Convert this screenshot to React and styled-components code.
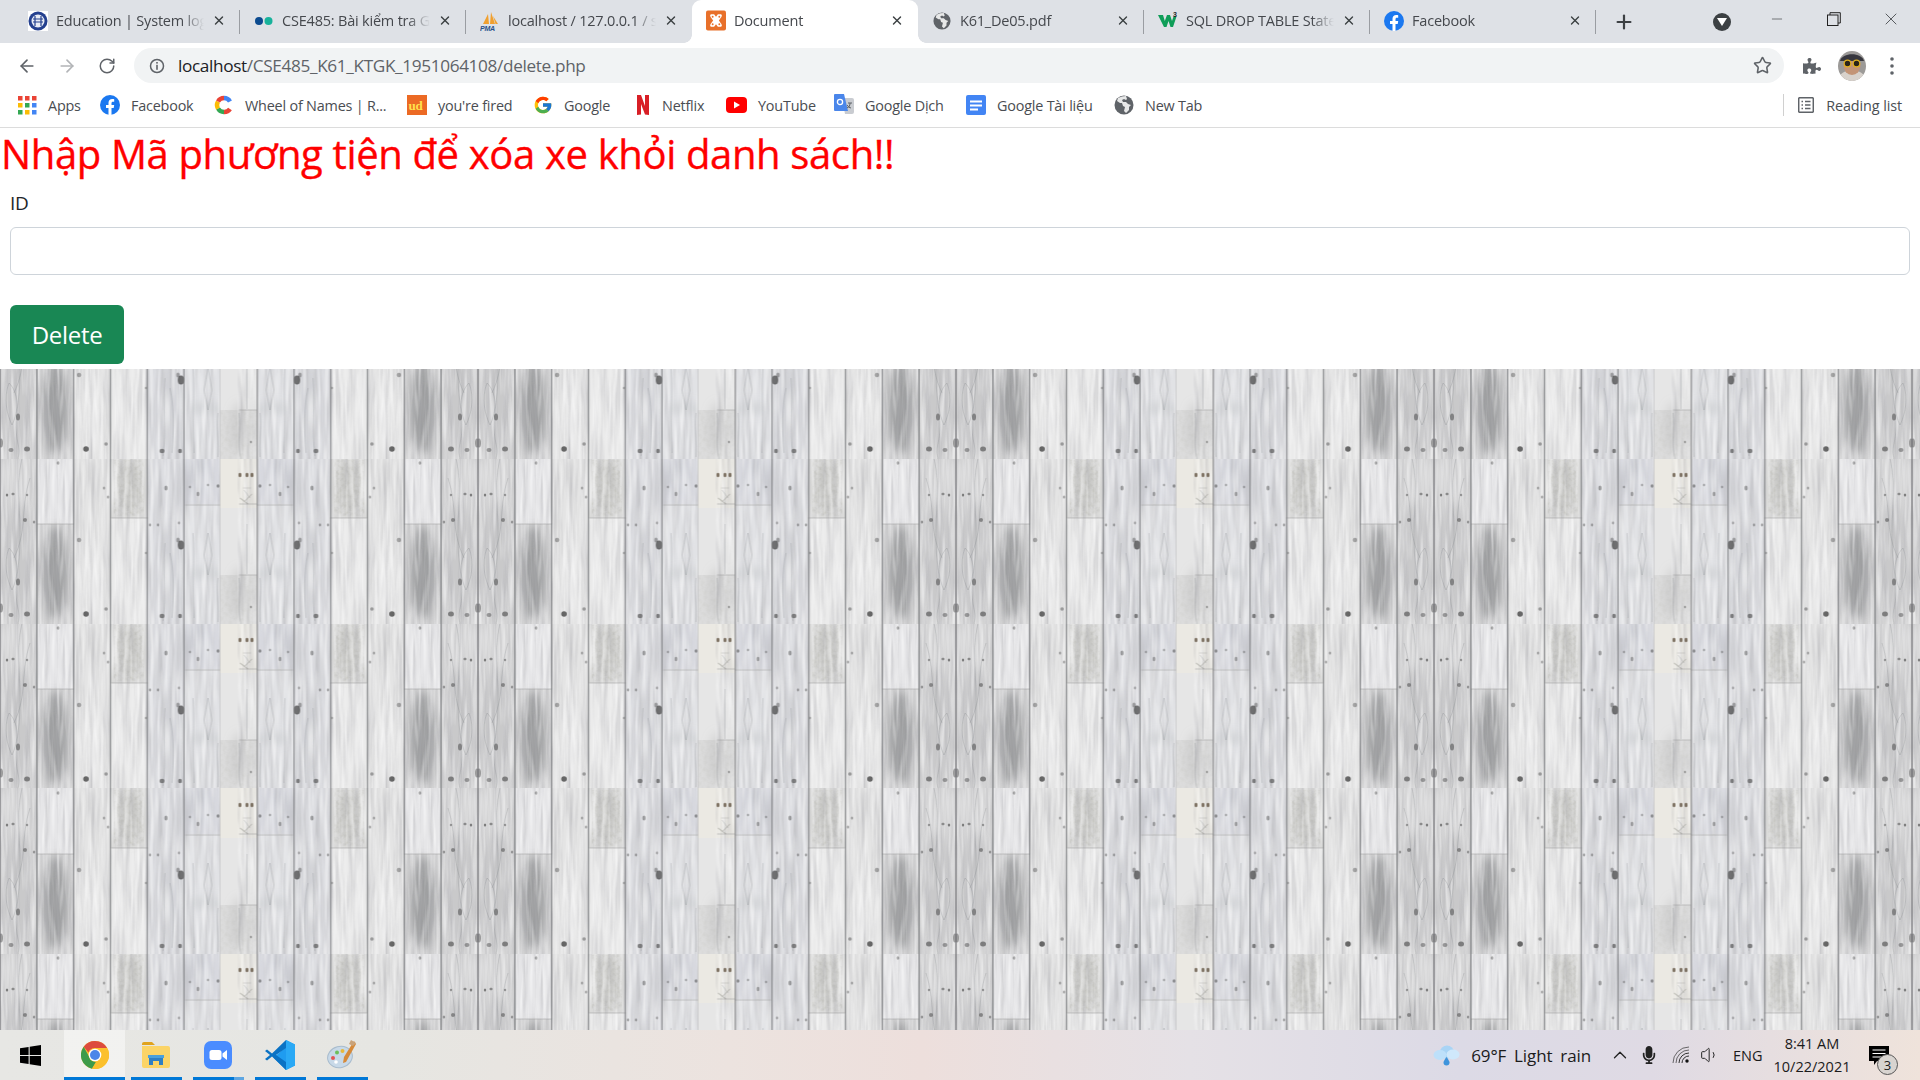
import React from "react";
import styled, { createGlobalStyle } from "styled-components";
import { ArrowLeft, ArrowRight, RotateCw, Star, Plus, X, Minus, ChevronUp, Volume1 } from "lucide-react";
import { FcGoogle } from "react-icons/fc";
import { FaPuzzlePiece, FaMicrophone } from "react-icons/fa";

const UI = '"Open Sans", "Noto Sans", "Liberation Sans", sans-serif';

const Global = createGlobalStyle`
  html, body { margin: 0; padding: 0; height: 100%; background: #fff; overflow: hidden; }
  body { font-family: ${UI}; }
  #root { height: 100%; }
`;

const Screen = styled.div`
  width: 1920px; height: 1080px; display: flex; flex-direction: column; overflow: hidden; background: #fff;
`;

/* ---------- tab strip ---------- */
const TabStrip = styled.div`
  height: 43px; flex: none; display: flex; align-items: stretch; background: #dee1e6; padding-left: 14px;
`;
const Tab = styled.div`
  position: relative; width: 226px; flex: none; box-sizing: border-box; display: flex; align-items: center;
  padding: 0 0 2px 14px; border-radius: 9px 9px 0 0; background: ${p => (p.$active ? "#fff" : "transparent")};
  color: #45484d; font-size: 14.5px; letter-spacing: -0.2px;
  ${p => p.$sep && `&::after { content: ""; position: absolute; right: 0; top: 10px; height: 24px; width: 1px; background: #9a9da2; }`}
  ${p => p.$active && `
    &::before { content: ""; position: absolute; left: -8px; bottom: 0; width: 8px; height: 8px; background: radial-gradient(circle at 0 0, #dee1e6 7.5px, #fff 8px); }
    &::after { content: ""; position: absolute; right: -8px; bottom: 0; width: 8px; height: 8px; background: radial-gradient(circle at 100% 0, #dee1e6 7.5px, #fff 8px); }
  `}
`;
const Favicon = styled.span`
  width: 20px; height: 20px; flex: none; display: flex; align-items: center; justify-content: center;
`;
const TabTitle = styled.span`
  margin-left: 8px; width: 148px; flex: none; white-space: nowrap; overflow: hidden;
  -webkit-mask-image: linear-gradient(90deg, #000 ${p => (p.$fade ? "85%" : "100%")}, transparent);
  mask-image: linear-gradient(90deg, #000 ${p => (p.$fade ? "85%" : "100%")}, transparent);
`;
const TabClose = styled.span`
  margin-left: 8px; width: 14px; display: flex; align-items: center; justify-content: center; color: #3c4043;
`;
const NewTab = styled.span`
  margin-left: 17px; align-self: center; display: flex; color: #3c4043;
`;
const TabSearch = styled.span`
  margin-left: 78px; align-self: center; width: 18px; height: 18px; border-radius: 50%; background: #3c4043; display: flex; align-items: center; justify-content: center;
`;
const WindowControls = styled.div`
  margin-left: 36px; display: flex; gap: 37px; align-self: flex-start; padding-top: 9px; color: #3c4043;
`;
const WindowButton = styled.span` width: 20px; height: 20px; display: flex; align-items: center; justify-content: center; `;

/* ---------- toolbar ---------- */
const Toolbar = styled.div`
  height: 40px; flex: none; display: flex; align-items: flex-end; background: #fff; padding-left: 17px;
`;
const NavButtons = styled.div` display: flex; gap: 20px; height: 35px; align-items: center; color: #5f6368; `;
const NavIcon = styled.span` width: 20px; display: flex; justify-content: center; color: ${p => p.$dim ? "#b2b4b7" : "#5f6368"}; `;
const Omnibox = styled.div`
  margin-left: 17px; width: 1650px; height: 35px; border-radius: 18px; background: #f1f3f4; display: flex; align-items: center; padding: 0 12px 0 15px; box-sizing: border-box;
`;
const Url = styled.div` margin-left: 13px; flex: 1; font-size: 17.2px; letter-spacing: -0.35px; color: #5f6368; white-space: nowrap; `;
const UrlHost = styled.span` color: #202124; `;
const ToolbarEnd = styled.div`
  display: flex; align-items: center; height: 35px; margin-left: 19px;
`;
const MenuDots = styled.span` display: flex; margin-left: 7px; `;

/* ---------- bookmarks ---------- */
const Bookmarks = styled.div`
  height: 45px; flex: none; box-sizing: border-box; border-bottom: 1px solid #dcdcdc; background: #fff; display: flex; align-items: center; padding: 0 0 0 17px; color: #4a4d52; font-size: 14.4px; letter-spacing: -0.2px;
`;
const Bookmark = styled.div` width: ${p => p.$w}px; flex: none; display: flex; align-items: center; gap: ${p => p.$gap ?? 11}px; white-space: nowrap; `;
const ReadingList = styled.div`
  margin-left: auto; margin-right: 18px; display: flex; align-items: center; gap: 12px; height: 22px; padding-left: 14px; border-left: 1px solid #d0d0d0; white-space: nowrap; letter-spacing: -0.1px;
`;

/* ---------- page ---------- */
const Heading = styled.h1`
  margin: 0; padding: 0 0 0 1px; height: 54px; box-sizing: border-box; font-size: 40px; font-weight: 400; line-height: 52px; color: #f00; letter-spacing: -0.36px; white-space: nowrap; -webkit-text-stroke: 0.35px #f00;
`;
const Form = styled.form` padding: 0 10px 0 10px; margin: 0; `;
const Label = styled.label` display: block; font-size: 19px; line-height: 26px; margin-top: 8px; color: #212529; letter-spacing: -0.3px; `;
const Input = styled.input`
  display: block; width: 100%; box-sizing: border-box; height: 48px; margin-top: 11px; border: 1px solid #ced4da; border-radius: 6px; background: #fff; outline: none;
`;
const Button = styled.button`
  display: block; margin-top: 30px; width: 114px; height: 59px; border: 0; border-radius: 6px; background: #198754; color: #fff; font-family: inherit; font-size: 24px; padding: 0; letter-spacing: -0.3px;
`;
const WoodArea = styled.div`
  margin-top: 5px; flex: 1; min-height: 0; overflow: hidden; display: flex;
`;

/* ---------- taskbar ---------- */
const Taskbar = styled.div`
  height: 50px; flex: none; display: flex; align-items: stretch; font-size: 16px; color: #1b1b1b;
  background: linear-gradient(90deg, #e7e7e4 0, #e6e6e2 20%, #ece3df 38%, #eddfdc 48%, #e5e1e6 62%, #dcdae6 76%, #dfdae4 86%, #efe3db 100%);
`;
const StartCell = styled.div` width: 64px; display: flex; align-items: center; justify-content: center; padding-right: 4px; box-sizing: border-box; `;
const AppCell = styled.div`
  position: relative; width: ${p => p.$w ?? 62}px; flex: none; display: flex; align-items: center; justify-content: center;
  background: ${p => (p.$active ? "rgba(255,255,255,.45)" : "transparent")};
  &::after { content: ""; position: absolute; bottom: 0; height: 3px; left: ${p => (p.$active ? 0 : "5.5px")}; right: ${p => (p.$active ? 0 : "5.5px")}; background: ${p => p.$split ? "linear-gradient(90deg, #0078d7 80%, #5ea6e2 80%)" : "#0078d7"}; }
`;
const Tray = styled.div` margin-left: auto; display: flex; align-items: center; position: relative; `;
const Weather = styled.div` display: flex; align-items: center; gap: 11px; margin-right: 15px; white-space: nowrap; word-spacing: 3.5px; letter-spacing: -0.1px; font-size: 17px; `;
const TrayIcon = styled.span` display: flex; width: ${p => p.$w}px; justify-content: center; color: #222; `;
const Lang = styled.span` font-size: 14.5px; margin: 0 0 0 11px; width: 30px; `;
const Clock = styled.div` width: 96px; margin-left: 1px; text-align: center; font-size: 14.5px; line-height: 23px; `;
const Notify = styled.div` position: relative; width: 60px; height: 100%; display: flex; align-items: center; padding-left: 9px; box-sizing: border-box; `;
const Badge = styled.span`
  position: absolute; left: 17px; top: 24px; width: 19px; height: 19px; border-radius: 50%; border: 1px solid #555; background: #d8d4d0; display: flex; align-items: center; justify-content: center; font-size: 13px; color: #222;
`;

/* ---------- drawings ---------- */
const Globe = ({ s = 18 }) => (
  <svg width={s} height={s} viewBox="0 0 20 20"><circle cx="10" cy="10" r="9.5" fill="#5f6368" />
    <path d="M8 1.5 4 3l-1 3 3 2 2 0 1 3 2 1-1 4 2 2 3-3 0-3 2-2-3-1-2-2-3 0-1-2 2-1 2 1 1-1-1-3z" fill="#fff" opacity=".85" /></svg>
);
const FbIcon = ({ s = 20 }) => (
  <svg width={s} height={s} viewBox="0 0 20 20"><circle cx="10" cy="10" r="10" fill="#1b78f0" />
    <path d="M8.5 20v-7H6v-3h2.5V7.8C8.5 5.3 10 4 12.2 4c1 0 2 .2 2 .2v2.5H13c-1.200 0-1.500.7-1.500 1.500V10h2.700l-.5 3h-2.200v7z" fill="#fff" /></svg>
);
const EduIcon = () => (
  <svg width="20" height="20" viewBox="0 0 20 20"><rect width="20" height="20" fill="#fff" /><circle cx="10" cy="10" r="9.500" fill="#24408f" /><circle cx="10" cy="10" r="6.500" fill="#e8ecf5" /><path d="M5 8h10M5 11h10M7 5v10M13 5v10" stroke="#24408f" strokeWidth="1.200" /></svg>
);
const DotsIcon = () => (
  <svg width="20" height="20" viewBox="0 0 20 20"><circle cx="5" cy="10" r="4" fill="#0b4a8f" /><circle cx="14.500" cy="10" r="4" fill="#17b29b" /></svg>
);
const PmaIcon = () => (
  <svg width="20" height="20" viewBox="0 0 20 20"><path d="M3 13 8 3l1 10zM10 13l1-12 4 12zM15.500 13 13 5l5 8z" fill="#f0a030" /><text x="0" y="19.500" fontSize="7" fontWeight="700" fontStyle="italic" fill="#25508a" fontFamily="Liberation Sans">PMA</text></svg>
);
const XamppIcon = () => (
  <svg width="21" height="21" viewBox="0 0 21 21"><rect width="21" height="21" rx="2" fill="#e8702a" /><path d="M5 4h3.500l2 2.500 2-2.500H16q1.500 1.500 0 3l-2.500 3.500L16 14q1.500 1.500 0 3h-3.500l-2-2.500-2 2.500H5q-1.500-1.500 0-3l2.500-3.500L5 7q-1.500-1.500 0-3z" fill="#fff" /><circle cx="7" cy="6.500" r="1" fill="#e8702a" /><circle cx="14" cy="6.500" r="1" fill="#e8702a" /><circle cx="7" cy="14.500" r="1" fill="#e8702a" /><circle cx="14" cy="14.500" r="1" fill="#e8702a" /></svg>
);
const W3Icon = () => (
  <svg width="20" height="20" viewBox="0 0 20 20"><path d="M0 4h5l1.800 6L9 4h3l2 6 1.500-4.500h3L15 16h-2.500L10.500 10l-2 6H6z" fill="#0f9d58" /><text x="15" y="6" fontSize="7" fontWeight="700" fill="#222" fontFamily="Liberation Sans">3</text></svg>
);
const AppsIcon = () => (
  <svg width="20" height="20" viewBox="0 0 20 20">{[["#ea4335","#ea4335","#ea4335"],["#fbbc04","#34a853","#4285f4"],["#34a853","#fbbc04","#4285f4"]].map((r, j) => r.map((c, i) => <rect key={i + "-" + j} x={1 + i * 7} y={1 + j * 7} width="4.500" height="4.500" fill={c} />))}</svg>
);
const WheelIcon = () => (
  <svg width="20" height="20" viewBox="0 0 20 20" fill="none" strokeWidth="4.500"><path d="M10 3a7 7 0 0 1 6 3.500" stroke="#4285f4" /><path d="M16 14a7 7 0 0 1-6 3" stroke="#ea4335" /><path d="M10 17a7 7 0 0 1-6-3.500" stroke="#34a853" /><path d="M4 13.500a7 7 0 0 1 0-7" stroke="#fbbc04" /><path d="M4 6.500A7 7 0 0 1 10 3" stroke="#ea4335" /></svg>
);
const UdIcon = () => (
  <svg width="20" height="20" viewBox="0 0 20 20"><rect width="20" height="20" fill="#ec6a24" /><text x="1.500" y="14.500" fontSize="13" fontWeight="700" fill="#ffe14d" fontFamily="Liberation Serif">ud</text></svg>
);
const NetflixIcon = () => (
  <svg width="14" height="20" viewBox="0 0 14 20"><path d="M1 0h4l4 11V0h4v20q-2-.5-4-.5L5 9v10.500L1 20z" fill="#d81f26" /></svg>
);
const YtIcon = () => (
  <svg width="21" height="16" viewBox="0 0 21 16"><rect width="21" height="16" rx="4" fill="#f00" /><path d="M8 4.500v7l6-3.500z" fill="#fff" /></svg>
);
const TranslateIcon = () => (
  <svg width="20" height="22" viewBox="0 0 20 22"><path d="M8 4h10q2 0 2 2v12q0 2-2 2h-7z" fill="#c9ccd1" /><path d="M1 0h9l4 17H1q-1 0-1-1V1q0-1 1-1z" fill="#4a86ea" /><circle cx="6" cy="8" r="2.600" fill="none" stroke="#fff" strokeWidth="1.300" /><path d="m14 9 4 0m-2 0v1q0 3-3 4m0-3q2 3 4 3" stroke="#5f6368" fill="none" /></svg>
);
const DocsIcon = () => (
  <svg width="20" height="20" viewBox="0 0 20 20"><rect width="20" height="20" rx="2" fill="#4285f4" /><path d="M4 5.500h12v2H4zM4 9.500h12v2H4zM4 13.500h8v2H4z" fill="#fff" /></svg>
);
const ReadingIcon = () => (
  <svg width="16" height="16" viewBox="0 0 16 16" fill="none"><rect x=".7" y=".7" width="14.600" height="14.600" rx="1" stroke="#5f6368" strokeWidth="1.500" /><path d="M3.500 4.500h1.500M3.500 8h1.500M3.500 11.500h1.500M7 4.500h5.500M7 8h5.500M7 11.500h5.500" stroke="#5f6368" strokeWidth="1.500" /></svg>
);
const InfoIcon = () => (
  <svg width="16" height="16" viewBox="0 0 16 16" fill="none"><circle cx="8" cy="8" r="6.500" stroke="#5f6368" strokeWidth="1.500" /><rect x="7.200" y="4" width="1.600" height="1.600" fill="#5f6368" /><rect x="7.200" y="6.800" width="1.600" height="5" fill="#5f6368" /></svg>
);
const RestoreIcon = () => (
  <svg width="14" height="14" viewBox="0 0 14 14" fill="none" stroke="#222"><rect x=".5" y="3" width="10.500" height="10.500" /><path d="M3 3V.7h10.300V11H11" /></svg>
);
const Avatar = () => (
  <svg width="28" height="30" viewBox="0 0 28 30"><defs><clipPath id="av"><ellipse cx="14" cy="15" rx="14" ry="15" /></clipPath></defs><g clipPath="url(#av)"><rect width="28" height="30" fill="#9c9a98" /><path d="M0 30c2-9 6-10 14-10s12 1 14 10z" fill="#d8d2cc" /><ellipse cx="14" cy="15" rx="8.500" ry="9" fill="#c39476" /><path d="M2 10C4 1 24 1 26 10z" fill="#36363e" /><circle cx="9.500" cy="12.500" r="3.300" fill="#2a2418" stroke="#e2b11f" strokeWidth="1.200" /><circle cx="18.500" cy="12.500" r="3.300" fill="#2a2418" stroke="#e2b11f" strokeWidth="1.200" /></g></svg>
);
const WinLogo = () => (
  <svg width="21" height="21" viewBox="0 0 21 21"><path d="M0 3.200 8.600 2v8H0zM9.700 1.800 21 0v10H9.700zM0 11h8.600v8L0 17.800zM9.700 11H21v10L9.700 19.200z" fill="#000" /></svg>
);
const ChromeLogo = () => (
  <svg width="28" height="28" viewBox="0 0 28 28"><circle cx="14" cy="14" r="14" fill="#fbc02d" /><path d="M14 0a14 14 0 0 1 12.100 7H14a7 7 0 0 0-6.600 4.500L2.700 5.700A14 14 0 0 1 14 0z" fill="#dd4b3e" /><path d="M2.700 5.700 8 15.500a7 7 0 0 0 6.800 5.400L11 27.700A14 14 0 0 1 2.700 5.700z" fill="#3d9b4a" /><path d="M26.100 7A14 14 0 0 1 11 27.700l4.800-7.100A7 7 0 0 0 19.500 10z" fill="#fbc02d" /><circle cx="14" cy="14" r="6.300" fill="#fff" /><circle cx="14" cy="14" r="5" fill="#4a86e8" /></svg>
);
const FolderLogo = () => (
  <svg width="28" height="26" viewBox="0 0 28 26"><path d="M0 2q0-2 2-2h8l3 3H0z" fill="#e0a31e" /><path d="M0 4h26q2 0 2 2v18q0 2-2 2H2q-2 0-2-2z" fill="#fbd467" /><path d="M7 14h14v9h-4v-4h-6v4H7z" fill="#2e7fc4" /><rect x="6" y="13" width="16" height="3" fill="#4aa0dc" /></svg>
);
const ZoomLogo = () => (
  <svg width="28" height="28" viewBox="0 0 28 28"><rect width="28" height="28" rx="7" fill="#4a8cff" /><rect x="5.500" y="9" width="12" height="10" rx="2.500" fill="#fff" /><path d="m18.500 12.500 4.500-3.500v10l-4.500-3.500z" fill="#fff" /></svg>
);
const CodeLogo = () => (
  <svg width="30" height="30" viewBox="0 0 30 30"><path d="M21 0 30 4.500v21L21 30 8.500 17.500 21 7z" fill="#1f9cf0" /><path d="M21 0 7 13.500 2 9.500 0 11l5 4-5 4 2 1.500 5-4L21 30V22L11 15 21 8z" fill="#0a72c4" /><path d="M21 0 30 4.500v21L21 30z" fill="#2aa9f5" /></svg>
);
const PaintLogo = () => (
  <svg width="30" height="30" viewBox="0 0 30 30"><ellipse cx="13" cy="17" rx="12.500" ry="10.500" fill="#c8d9e8" stroke="#a9bccd" transform="rotate(-15 13 17)" /><circle cx="6" cy="18" r="2" fill="#e25555" /><circle cx="10" cy="12.500" r="2" fill="#6cbf5a" /><circle cx="15.500" cy="11" r="2" fill="#e8b93c" /><circle cx="9" cy="22" r="1.800" fill="#fff" /><path d="M27 1 17 17l-1 6 3-1 10-18z" fill="#d68a3a" /><path d="M24 0 29 3l-3 3-4-2z" fill="#c9a37a" /></svg>
);
const CloudIcon = () => (
  <svg width="27" height="22" viewBox="0 0 27 22"><ellipse cx="14" cy="8" rx="7" ry="6.500" fill="#a9d4f5" /><ellipse cx="7" cy="11" rx="6.500" ry="5" fill="#bde0fa" /><ellipse cx="20" cy="10.500" rx="6.500" ry="5" fill="#cfe8fb" /><path d="M13.500 13q-3 4-3 5.500a3 3 0 0 0 6 0q0-1.500-3-5.500z" fill="#3f94dc" /></svg>
);
const WifiIcon = () => (
  <svg width="18" height="18" viewBox="0 0 18 18" fill="none" stroke="#333" strokeWidth="1"><path d="M1 17A16 16 0 0 1 17 1M4 17A13 13 0 0 1 17 4" opacity=".7" /><path d="M7 17A10 10 0 0 1 17 7M10 17a7 7 0 0 1 7-7" /><circle cx="15" cy="15" r="1.700" fill="#111" stroke="none" /></svg>
);
const NotifyIcon = () => (
  <svg width="20" height="19" viewBox="0 0 20 19"><path d="M0 0h20v15H8l-3 4v-4H0z" fill="#000" /><path d="M3.500 4h13M3.500 7.500h13M3.500 11h10" stroke="#fff" /></svg>
);

/* ---------- wood texture (13 boards, mirrored around the 7th) ---------- */
const P = 36.77;
const boards = [
  [["#d4d4d5", 0, 165]],
  [["#e6e6e8", 0, 66], ["#cfcfd0", 66, 99]],
  [["#e4e4e4", 0, 165]],
  [["#dadad9", 0, 60], ["#ebebeb", 60, 105]],
  [["#dcdde1", 0, 165]],
  [["#d8d9df", 0, 46], ["#e1e2e5", 46, 119]],
  [["#ebe9e3", 0, 50], ["#e6e6e6", 50, 67], ["#dcdcdc", 117, 48]],
];
const smudges = [
  [55, 115, 12, 46, "#7e8082", .65], [19, 105, 15, 60, "#a8a8aa", .25], [130, 30, 12, 26, "#a5a5a0", .3],
  [205, 115, 16, 6, "#b0b2b5", .3], [169, 110, 4, 50, "#909195", .25], [239, 135, 10, 26, "#aaaaaa", .25],
  [92, 120, 10, 40, "#ffffff", .3], [200, 20, 12, 20, "#c5c7d0", .3],
];
const knots = [
  [18, 124, 2, 3.5, .45], [11, 157, 2.5, 2, .4], [27, 156, 3, 2.5, .5], [1, 150, 2, 4.5, .4], [7, 37, 1.2, 1.6, .55], [13, 36, 1.6, 1.2, .45], [27, 37, 1.2, 1.2, .4], [25, 62, 2, 2, .45], [34, 64, 1.2, 1.6, .4],
  [58, 5, 1.4, 1.8, .35], [79, 82, 2.2, 2.2, .35], [86, 156, 2.8, 2.8, .7], [106, 151, 1.8, 1.8, .4], [104, 30, 1.2, 1.6, .35], [108, 39, 1.2, 1.6, .35],
  [146, 95, 1.2, 1.2, .3], [181, 87, 3.2, 4.5, .65], [178, 82, 1.8, 2.6, .35], [162, 158, 2.6, 2.2, .5], [180, 158, 1.8, 2.2, .55], [166, 30, 1.6, 2.6, .4], [150, 67, 1, 1.4, .45], [158, 67, 1, 1.4, .45], [179, 65, 1, 1.4, .4],
  [190, 29, 1, 1.3, .4], [198, 36, 1.3, 2.2, .4], [208, 27, 1, 1.3, .4], [218, 28, 1.3, 1.8, .5], [227, 149, .8, 1.2, .5],
];
const browns = [[226, 17], [231, 17], [238, 17]];
const grainLines = [
  "M22 0C14 30 24 70 18 110s4 40 0 55", "M30 20C20 50 28 70 14 100", "M9 90c-6 15-2 32 3 42 5-10 9-30-3-42z", "M165 85c-3 30 2 50-2 78", "M170 95c4 20 4 40 2 65", "M181 90c2 30-1 50 1 70",
  "M208 75l-4 22 4 20 4-20z", "M218 120c-2 15 1 30 0 44", "M231 66v50M239 120c-2 15 2 30-2 45", "M228 40l6-8M235 30l-8 0", "M193 75c2 30-1 50 1 85",
];

const WoodHalf = () => (
  <g>
    {boards.map((segs, i) => segs.map(([c, y, h]) => <rect key={i + "-" + y} x={i * P} y={y} width={P + 0.5} height={h} fill={c} />))}
    <rect x={P * 3 + 4} y="2" width={P - 8} height="56" filter="url(#speck)" />
    <rect x={P * 6} y="117" width={P} height="48" filter="url(#speck)" opacity=".35" />
    <g filter="url(#soft)">
      {smudges.map(([x, y, rx, ry, c, o], i) => <ellipse key={i} cx={x} cy={y} rx={rx} ry={ry} fill={c} opacity={o} />)}
    </g>
    <rect width="240" height="165" filter="url(#grainDark)" />
    <rect width="240" height="165" filter="url(#grainLight)" />
    <g filter="url(#tiny)">
      {grainLines.map((d, i) => <path key={i} d={d} fill="none" stroke="#77797c" strokeWidth=".8" opacity=".3" />)}
      {knots.map(([x, y, rx, ry, o], i) => <ellipse key={i} cx={x} cy={y} rx={rx} ry={ry} fill="#2e2e2e" opacity={o} />)}
      {browns.map(([x, y], i) => <ellipse key={i} cx={x} cy={y} rx="1.500" ry="2.200" fill="#4c3a28" opacity=".7" />)}
      <path d="M221 46h18M185 47h36M37 66h37M111 60h37M221 117h18" stroke="#9a9a9a" strokeWidth="1" opacity=".5" />
      <path d="M226 36l8 8M238 40l-8 6" stroke="#8e8e86" strokeWidth="1" opacity=".45" />
      {boards.map((_, i) => <rect key={i} x={i * P - 0.6} y="0" width="1.400" height="165" fill="#747678" opacity=".72" />)}
    </g>
  </g>
);

const Wood = () => (
  <svg width="100%" height="100%" style={{ display: "block" }}>
    <defs>
      <filter id="grainDark" x="0" y="0" width="100%" height="100%">
        <feTurbulence type="fractalNoise" baseFrequency="0.2 0.014" numOctaves="3" seed="4" />
        <feColorMatrix values="0 0 0 0 .45  0 0 0 0 .45  0 0 0 0 .47  1.300 0 0 0 -.53" />
        <feGaussianBlur stdDeviation=".5" />
      </filter>
      <filter id="grainLight" x="0" y="0" width="100%" height="100%">
        <feTurbulence type="fractalNoise" baseFrequency="0.26 0.02" numOctaves="2" seed="11" />
        <feColorMatrix values="0 0 0 0 1  0 0 0 0 1  0 0 0 0 1  0 1.400 0 0 -.6" />
        <feGaussianBlur stdDeviation=".5" />
      </filter>
      <filter id="speck" x="0" y="0" width="100%" height="100%">
        <feTurbulence type="fractalNoise" baseFrequency="0.3 0.22" numOctaves="3" seed="7" />
        <feColorMatrix values="0 0 0 0 .55  0 0 0 0 .55  0 0 0 0 .52  1.900 0 0 0 -.78" />
        <feGaussianBlur stdDeviation=".4" />
      </filter>
      <filter id="soft" x="-10%" y="-10%" width="120%" height="120%"><feGaussianBlur stdDeviation="4" /></filter>
      <filter id="tiny" x="-2%" y="-2%" width="104%" height="104%"><feGaussianBlur stdDeviation=".7" /></filter>
      <pattern id="planks" patternUnits="userSpaceOnUse" x="0" y="-76" width={P * 13} height="165">
        <WoodHalf />
        <g transform={`translate(${P * 13} 0) scale(-1 1)`}><WoodHalf /></g>
      </pattern>
    </defs>
    <rect width="100%" height="100%" fill="url(#planks)" />
  </svg>
);

/* ---------- data ---------- */
const tabs = [
  { icon: <EduIcon />, title: "Education | System log", fade: true, sep: true },
  { icon: <DotsIcon />, title: "CSE485: Bài kiểm tra Giữa", fade: true, sep: true },
  { icon: <PmaIcon />, title: "localhost / 127.0.0.1 / sql", fade: true },
  { icon: <XamppIcon />, title: "Document", active: true },
  { icon: <Globe />, title: "K61_De05.pdf", sep: true },
  { icon: <W3Icon />, title: "SQL DROP TABLE Statement", fade: true, sep: true },
  { icon: <FbIcon />, title: "Facebook", sep: true },
];
const marks = [
  { icon: <AppsIcon />, label: "Apps", w: 83 },
  { icon: <FbIcon />, label: "Facebook", w: 114 },
  { icon: <WheelIcon />, label: "Wheel of Names | R...", w: 193 },
  { icon: <UdIcon />, label: "you're fired", w: 126 },
  { icon: <FcGoogle size={20} />, label: "Google", w: 103 },
  { icon: <NetflixIcon />, label: "Netflix", w: 90, gap: 12 },
  { icon: <YtIcon />, label: "YouTube", w: 108 },
  { icon: <TranslateIcon />, label: "Google Dịch", w: 132 },
  { icon: <DocsIcon />, label: "Google Tài liệu", w: 148 },
  { icon: <Globe s={20} />, label: "New Tab", w: 90 },
];
const apps = [
  { logo: <ChromeLogo />, active: true, w: 61 },
  { logo: <FolderLogo /> },
  { logo: <ZoomLogo />, split: true },
  { logo: <CodeLogo /> },
  { logo: <PaintLogo /> },
];

export default function App() {
  return (
    <Screen>
      <Global />
      <TabStrip>
        {tabs.map(t => (
          <Tab key={t.title} $active={t.active} $sep={t.sep}>
            <Favicon>{t.icon}</Favicon>
            <TabTitle $fade={t.fade}>{t.title}</TabTitle>
            <TabClose><X size={15} strokeWidth={2.4} /></TabClose>
          </Tab>
        ))}
        <NewTab><Plus size={22} strokeWidth={2.4} /></NewTab>
        <TabSearch>
          <svg width="10" height="8" viewBox="0 0 10 8"><path d="M0 0h10L5 8z" fill="#fff" /></svg>
        </TabSearch>
        <WindowControls>
          <WindowButton><Minus size={16} strokeWidth={1} /></WindowButton>
          <WindowButton><RestoreIcon /></WindowButton>
          <WindowButton><X size={20} strokeWidth={1} /></WindowButton>
        </WindowControls>
      </TabStrip>
      <Toolbar>
        <NavButtons>
          <NavIcon><ArrowLeft size={20} /></NavIcon>
          <NavIcon $dim><ArrowRight size={20} /></NavIcon>
          <NavIcon><RotateCw size={18} /></NavIcon>
        </NavButtons>
        <Omnibox>
          <InfoIcon />
          <Url><UrlHost>localhost</UrlHost>/CSE485_K61_KTGK_1951064108/delete.php</Url>
          <Star size={19} color="#5f6368" strokeWidth={2} />
        </Omnibox>
        <ToolbarEnd>
          <FaPuzzlePiece size={18} color="#5f6368" />
          <TrayIcon $w={62}><Avatar /></TrayIcon>
          <MenuDots><svg width="4" height="18" viewBox="0 0 4 18"><circle cx="2" cy="2" r="1.800" fill="#5f6368" /><circle cx="2" cy="9" r="1.800" fill="#5f6368" /><circle cx="2" cy="16" r="1.800" fill="#5f6368" /></svg></MenuDots>
        </ToolbarEnd>
      </Toolbar>
      <Bookmarks>
        {marks.map(m => (
          <Bookmark key={m.label} $w={m.w} $gap={m.gap}>{m.icon}<span>{m.label}</span></Bookmark>
        ))}
        <ReadingList><ReadingIcon /><span>Reading list</span></ReadingList>
      </Bookmarks>
      <Heading>Nhập Mã phương tiện để xóa xe khỏi danh sách!!</Heading>
      <Form onSubmit={e => e.preventDefault()}>
        <Label htmlFor="id">ID</Label>
        <Input id="id" />
        <Button>Delete</Button>
      </Form>
      <WoodArea><Wood /></WoodArea>
      <Taskbar>
        <StartCell><WinLogo /></StartCell>
        {apps.map((a, i) => (
          <AppCell key={i} $active={a.active} $split={a.split} $w={a.w}>{a.logo}</AppCell>
        ))}
        <Tray>
          <Weather><CloudIcon /><span>69°F Light rain</span></Weather>
          <TrayIcon $w={28}><ChevronUp size={22} strokeWidth={1.4} /></TrayIcon>
          <TrayIcon $w={30}><FaMicrophone size={18} /></TrayIcon>
          <TrayIcon $w={34}><WifiIcon /></TrayIcon>
          <TrayIcon $w={24}><Volume1 size={20} strokeWidth={1.2} /></TrayIcon>
          <Lang>ENG</Lang>
          <Clock>8:41 AM<br />10/22/2021</Clock>
          <Notify><NotifyIcon /><Badge>3</Badge></Notify>
        </Tray>
      </Taskbar>
    </Screen>
  );
}
